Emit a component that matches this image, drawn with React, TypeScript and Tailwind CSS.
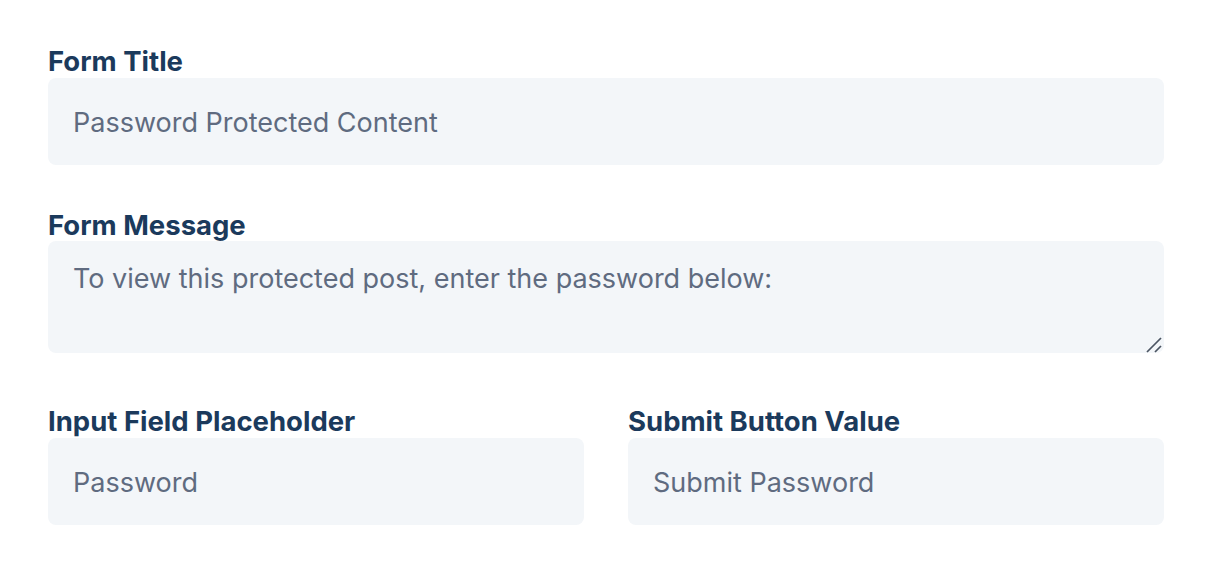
const Label = ({ children }: { children: string }) => (
  <label className="block text-[27.5px] leading-[32px] font-bold text-[#1b3a5c] translate-y-[1px]">
    {children}
  </label>
);

const fieldClass =
  "w-full rounded-lg bg-[#f3f6f9] px-[25px] text-[27px] text-[#5f6b80] outline-none";

export default function App() {
  return (
    <div
      className="min-h-screen bg-white px-[48px] pt-[44px]"
      style={{ fontFamily: "Inter, 'Noto Sans', sans-serif" }}
    >
      <div className="w-[1116px]">
        <Label>Form Title</Label>
        <input
          className={`${fieldClass} mt-[2px] h-[87px] pt-[2px]`}
          defaultValue="Password Protected Content"
        />

        <div className="mt-[43px]">
          <Label>Form Message</Label>
          <div className="relative mt-[1px]">
            <textarea
              className={`${fieldClass} block h-[112px] resize-none pt-[18px] leading-[40px]`}
              defaultValue="To view this protected post, enter the password below:"
            />
            <svg
              className="pointer-events-none absolute right-[2px] bottom-[0px]"
              width="16"
              height="16"
              viewBox="0 0 16 16"
            >
              <path d="M1 15 L15 1" stroke="#4b5563" strokeWidth="1.7" />
              <path d="M9 15 L15 9" stroke="#4b5563" strokeWidth="1.7" />
            </svg>
          </div>
        </div>

        <div className="mt-[51px] grid grid-cols-2 gap-x-[44px]">
          <div>
            <Label>Input Field Placeholder</Label>
            <input
              className={`${fieldClass} mt-[2px] h-[87px] pt-[2px]`}
              defaultValue="Password"
            />
          </div>
          <div>
            <Label>Submit Button Value</Label>
            <input
              className={`${fieldClass} mt-[2px] h-[87px] pt-[2px]`}
              defaultValue="Submit Password"
            />
          </div>
        </div>
      </div>
    </div>
  );
}
